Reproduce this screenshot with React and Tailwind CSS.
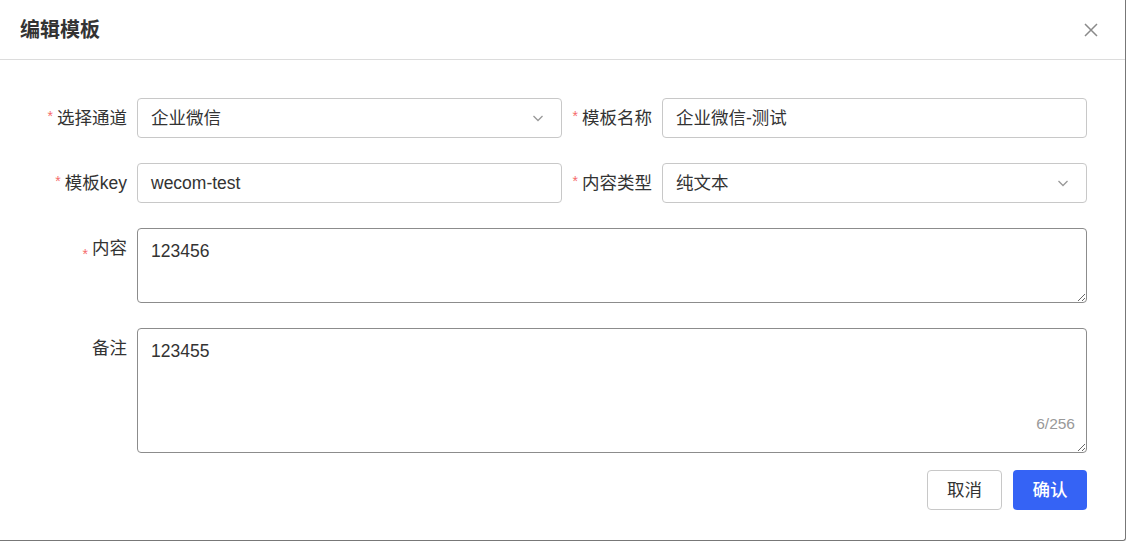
import React from "react";

const font = { fontFamily: '"Liberation Sans", "Noto Sans CJK SC", sans-serif' };

function Label({ text, required, top }) {
  return (
    <div
      className={`w-[100px] shrink-0 pr-[10px] flex justify-end text-[17.5px] text-[#333] ${
        top ? "items-start pt-[8px]" : "items-center h-[40px]"
      }`}
    >
      {required && <span className="text-[#f56c6c] text-[14px] mr-[4px] self-start mt-[11px] leading-none">*</span>}
      <span className="leading-[24px]">{text}</span>
    </div>
  );
}

function Chevron() {
  return (
    <svg width="14" height="14" viewBox="0 0 14 14" fill="none" stroke="#999" strokeWidth="1.3">
      <path d="M2.5 5l4.5 4.5L11.5 5" />
    </svg>
  );
}

function Input({ value, select }) {
  return (
    <div className="flex-1 h-[40px] border border-[#c8c8c8] rounded-[4px] flex items-center pl-[13px] pr-[16px] text-[17.5px] text-[#333]">
      <span className="flex-1">{value}</span>
      {select && <Chevron />}
    </div>
  );
}

function Area({ value, h, count }) {
  return (
    <div className="flex-1 relative flex">
      <textarea
        defaultValue={value}
        className={`w-full ${h} border border-[#8c8c8c] rounded-[4px] px-[13px] py-[9px] text-[17.5px] leading-[26px] text-[#333] outline-none resize-y`}
        style={font}
      />
      {count && (
        <span className="absolute right-[12px] bottom-[18px] text-[15.5px] text-[#999]">{count}</span>
      )}
    </div>
  );
}

export default function App() {
  return (
    <div
      className="w-[1126px] h-[541px] bg-white border-r border-b border-[#777] rounded-br-[3px] flex flex-col"
      style={font}
    >
      <div className="h-[60px] shrink-0 border-b border-[#dcdcdc] flex items-center justify-between pl-[20px] pr-[26px]">
        <h2 className="text-[20px] font-bold text-[#333]">编辑模板</h2>
        <svg width="16" height="16" viewBox="0 0 16 16" stroke="#8a8a8a" strokeWidth="1.5" fill="none">
          <path d="M2 2l12 12M14 2L2 14" />
        </svg>
      </div>

      <div className="flex flex-col pl-[37px] pr-[38px] pt-[38px]">
        <div className="flex">
          <div className="flex flex-1">
            <Label text="选择通道" required />
            <Input value="企业微信" select />
          </div>
          <div className="flex flex-1">
            <Label text="模板名称" required />
            <Input value="企业微信-测试" />
          </div>
        </div>
        <div className="flex mt-[25px]">
          <div className="flex flex-1">
            <Label text="模板key" required />
            <Input value="wecom-test" />
          </div>
          <div className="flex flex-1">
            <Label text="内容类型" required />
            <Input value="纯文本" select />
          </div>
        </div>
        <div className="flex mt-[25px]">
          <Label text="内容" required top />
          <Area value="123456" h="h-[75px]" />
        </div>
        <div className="flex mt-[25px]">
          <Label text="备注" top />
          <Area value="123455" h="h-[125px]" count="6/256" />
        </div>
      </div>

      <div className="flex justify-end gap-[11px] pr-[38px] pt-[17px]">
        <button className="w-[75px] h-[40px] border border-[#c8c8c8] rounded-[4px] text-[17.5px] text-[#333] bg-white">
          取消
        </button>
        <button className="w-[74px] h-[40px] rounded-[4px] text-[17.5px] text-white bg-[#3563f5] font-medium">
          确认
        </button>
      </div>
    </div>
  );
}
